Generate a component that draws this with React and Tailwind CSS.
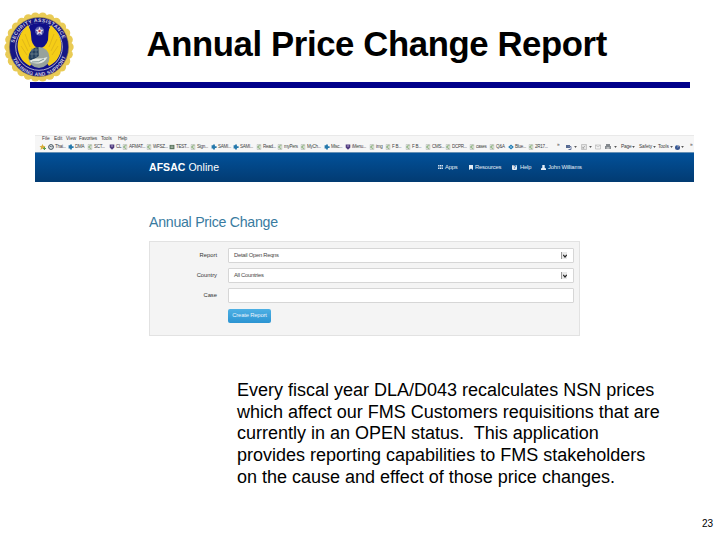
import clsx from "clsx";

const BOOKMARKS = [
  { label: "Thai...", icon: "globe", width: "w-[20px]" },
  { label: "DMA", icon: "plus", width: "w-[19px]" },
  { label: "SCT...", icon: "page", width: "w-[22px]" },
  { label: "CL", icon: "shield", width: "w-[13px]" },
  { label: "AFMAT...", icon: "page", width: "w-[24px]" },
  { label: "WFSZ...", icon: "page", width: "w-[23px]" },
  { label: "TEST...", icon: "box", width: "w-[21px]" },
  { label: "Sign...", icon: "page", width: "w-[21px]" },
  { label: "SAMI...", icon: "plus", width: "w-[22px]" },
  { label: "SAMI...", icon: "plus", width: "w-[23px]" },
  { label: "Read...", icon: "page", width: "w-[21px]" },
  { label: "myPers", icon: "page", width: "w-[23px]" },
  { label: "MyCh...", icon: "page", width: "w-[24px]" },
  { label: "Misc...", icon: "plus", width: "w-[21px]" },
  { label: "iMenu...", icon: "shield", width: "w-[24px]" },
  { label: "img", icon: "page", width: "w-[16px]" },
  { label: "F B...", icon: "page", width: "w-[20px]" },
  { label: "F B...", icon: "page", width: "w-[20px]" },
  { label: "CMS...", icon: "page", width: "w-[20px]" },
  { label: "DCPR...", icon: "page", width: "w-[24px]" },
  { label: "cases", icon: "page", width: "w-[20px]" },
  { label: "Q&A", icon: "page", width: "w-[19px]" },
  { label: "Blue...", icon: "diamond", width: "w-[20px]" },
  { label: "2R17...", icon: "page", width: "w-[25px]" },
];

function BookmarkIcon({ name }) {
  return (
    <svg viewBox="0 0 6 6" className="w-[6px] h-[6px] shrink-0">
      {name === "page" && (
        <>
          <path d="M1.2 .5h3.6v5H1.2z" fill="#f4f6f4" stroke="#a4aaa4" strokeWidth=".5" />
          <path d="M4.4 1.6A1.6 1.6 0 1 0 4.2 4.4M1.8 3h2" fill="none" stroke="#6c9c58" strokeWidth=".8" />
        </>
      )}
      {name === "globe" && (
        <>
          <circle cx="3" cy="3" r="2.4" fill="#e8eef0" stroke="#30404c" strokeWidth=".9" />
          <path d="M1.6 3.2l1-1 .8 1 1-1" fill="none" stroke="#30404c" strokeWidth=".8" />
        </>
      )}
      {name === "plus" && (
        <path d="M.6 1.2h1.5V.4h1.8v1.9h1.7v1.6H3.9v1.7H2.1V4.4H.6z" fill="#2478ac" />
      )}
      {name === "shield" && (
        <>
          <path d="M.7.6h4.6v3L3 5.7.7 3.6z" fill="#503c80" />
          <path d="M2 2h2" stroke="#d8c8e8" strokeWidth=".7" />
        </>
      )}
      {name === "box" && (
        <>
          <path d="M.6.9h4.8v4.3H.6z" fill="#56705a" />
          <path d="M1.6 2.2h2.8M1.6 3.6h2.8" stroke="#dce4d8" strokeWidth=".6" />
        </>
      )}
      {name === "diamond" && (
        <>
          <path d="M3 .4L5.8 3 3 5.6.2 3z" fill="#1f7cb4" />
          <circle cx="3" cy="3" r=".8" fill="#c8e4f4" />
        </>
      )}
    </svg>
  );
}

function Seal() {
  // scalloped outer edge
  const bumps = Array.from({ length: 26 }, (_, i) => {
    const a = (i / 26) * Math.PI * 2;
    return [35 + Math.cos(a) * 30.2, 35 + Math.sin(a) * 30.2];
  });

  return (
    <svg viewBox="0 0 70 70" className="w-[70px] h-[70px]">
      <defs>
        <path id="sealTop" d="M10.3 38a24.9 24.9 0 1 1 49.4 0" />
        <path id="sealBottom" d="M6.800 39a28.4 28.4 0 0 0 56.4 0" />
      </defs>
      {bumps.map(([cx, cy], i) => (
        <circle key={i} cx={cx} cy={cy} r="4.5" fill="#e9cb56" />
      ))}
      <circle cx="35" cy="35" r="32.5" fill="#e9cb56" />
      <circle cx="35" cy="35" r="29.6" fill="#161684" stroke="#8c7c4c" strokeWidth=".6" />
      <circle cx="35" cy="35" r="23.3" fill="#10108a" stroke="#d8d6dc" strokeWidth=".8" />
      <g fill="#d2cfdf" fontFamily="Liberation Sans" fontSize="5" fontWeight="bold">
        <text>
          <textPath href="#sealTop" startOffset="7" textLength="66">SECURITY ASSISTANCE</textPath>
        </text>
        <text>
          <textPath href="#sealBottom" startOffset="8" textLength="68">TRAINING AND SUPPORT</textPath>
        </text>
      </g>
      {/* wings */}
      <path
        d="M24 13C16 20 12.500 29 14 38c1.500 8 6 13 12 16l6-8 3-4V31l-6-7z"
        fill="#f5cd16"
      />
      <path
        d="M47 13c8 7 11.500 16 10 25-1.500 8-6 13-12 16l-6-8-4-4V31l7-7z"
        fill="#f5cd16"
      />
      <path
        d="M21 22l5 13M18 27l6 12M17 34l6 9M50 22l-5 13M53 27l-6 12M54 34l-6 9"
        stroke="#cda31c"
        strokeWidth=".5"
        fill="none"
      />
      {/* shield and star */}
      <path d="M26 13q9-4 19 0l-1 15q-2 7-8.500 8.500Q29 35 27.500 28z" fill="#10108a" />
      <circle cx="35.500" cy="19" r="4.500" fill="#5b5fae" />
      <path
        d="M35.500 14.800l1.100 2.900 3.100.1-2.400 1.900.8 3-2.600-1.700-2.600 1.700.8-3-2.400-1.900 3.100-.1z"
        fill="#eeeaf2"
      />
      <circle cx="35.500" cy="19" r="1.200" fill="#c23a48" />
      {/* globe */}
      <circle cx="35" cy="45.500" r="10.500" fill="#97a29c" />
      <path d="M34.500 35a10.500 10.500 0 0 0-9.700 12q2 2 4 1l6-4z" fill="#24405e" />
      <path d="M28 38h6M26 42h8M28 36v10M32 36v9" stroke="#7d9299" strokeWidth=".6" />
      <path d="M25.500 49q4-3 7-2.500 5 .5 11-1.500-3 6-9 6.500-6 .5-9-2.500z" fill="#e2e8e0" />
      <path d="M28 50q7 1 12-3" stroke="#4c6870" strokeWidth=".7" fill="none" />
    </svg>
  );
}

function Caret() {
  return (
    <svg viewBox="0 0 4 3" className="w-[3px] h-[2px] shrink-0">
      <path d="M0 0h4L2 3z" fill="#555" />
    </svg>
  );
}

function BrowserBar() {
  return (
    <div className="h-[17px] bg-[#f6f6f6] border-t border-[#e9e9e9] text-[#404040] text-[4.800px] leading-[6px] whitespace-nowrap">
      <div className="flex h-[6px] pl-[7px]">
        <span className="w-[12px]">File</span>
        <span className="w-[12px]">Edit</span>
        <span className="w-[13px]">View</span>
        <span className="w-[22px] tracking-[-0.2px]">Favorites</span>
        <span className="w-[17px] tracking-[-0.1px]">Tools</span>
        <span className="tracking-[-0.2px]">Help</span>
      </div>

      <div className="flex h-[10px] items-center pl-[4px]">
        <svg viewBox="0 0 8 6" className="w-[9px] h-[6px] shrink-0">
          <path d="M3 0l1 2h2L4.500 3.500 5 6 3 4.500 1 6l.5-2.500L0 2h2z" fill="#d8ae3c" />
          <path d="M5 3v3M3.500 4.500h3" stroke="#5c9c4c" />
        </svg>
        {BOOKMARKS.map((b, i) => (
          <span key={i} className={clsx("flex items-center gap-px shrink-0", b.width)}>
            <BookmarkIcon name={b.icon} />
            <span className="text-[4.500px] tracking-[-0.250px]">{b.label}</span>
          </span>
        ))}

        {/* command bar */}
        <span className="w-[8px] -mt-[5px] pl-[4px]">»</span>
        <div className="flex items-center ml-[5px] shrink-0">
          <svg viewBox="0 0 6 6" className="w-[6px] h-[6px]">
            <path d="M0 1h4v3H0z" fill="#566a92" />
            <path d="M2 2.500h3V5.500H2.500" stroke="#6878a0" fill="none" />
          </svg>
          <span className="w-[9px] pl-[2px] flex"><Caret /></span>
          <svg viewBox="0 0 6 6" className="w-[6px] h-[6px]">
            <path d="M.5.500h5v5h-5z" fill="#e6e6e6" stroke="#b4b4b4" strokeWidth=".7" />
            <path d="M1.800 4.200l2.400-2.400M1.800 2.800v1.400h1.400" fill="none" stroke="#999" strokeWidth=".7" />
          </svg>
          <span className="w-[8px] pl-[2px] flex"><Caret /></span>
          <svg viewBox="0 0 6 6" className="w-[6px] h-[6px]">
            <path d="M.5 1h5v4h-5zM.5 1L3 3l2.500-2" fill="#f4f4f4" stroke="#b0b0b0" strokeWidth=".6" />
          </svg>
          <svg viewBox="0 0 6 6" className="w-[6px] h-[6px] ml-[4px]">
            <path d="M1 0h4v2h1v3H0V2h1z" fill="#84898e" />
            <path d="M1.500 4h3" stroke="#eee" />
          </svg>
          <span className="w-[10px] pl-[3px] flex"><Caret /></span>
          <span className="w-[18px] flex items-center gap-px tracking-[-0.2px]">Page <Caret /></span>
          <span className="w-[19px] flex items-center gap-px tracking-[-0.1px]">Safety <Caret /></span>
          <span className="w-[17px] flex items-center gap-px tracking-[-0.1px]">Tools <Caret /></span>
          <span className="flex items-center justify-center w-[5px] h-[5px] rounded-full bg-[#38558e] text-white text-[4px]">?</span>
          <span className="w-[10px] pl-[1px] flex"><Caret /></span>
          <span className="-mt-[5px]">»</span>
        </div>
      </div>
    </div>
  );
}

function SiteHeader() {
  return (
    <header className="flex h-[30px] items-center bg-gradient-to-b from-[#02519a] to-[#023b72] border-t border-[#6690b5] text-white whitespace-nowrap">
      <div className="w-[403px] pl-[114px] text-[10.500px] leading-none tracking-[0.050px]">
        <b>AFSAC</b> Online
      </div>
      <nav className="flex items-center text-[5.800px] leading-none tracking-[-0.150px] text-[#e4edf5]">
        <span className="flex w-[31px] items-center gap-[2px]">
          <svg viewBox="0 0 6 5" className="w-[5px] h-[4px]">
            <path d="M0 0h1.600v2H0zm2.200 0h1.600v2H2.200zm2.200 0H6v2H4.400zM0 3h1.600v2H0zm2.200 0h1.600v2H2.200zm2.200 0H6v2H4.400z" fill="currentColor" />
          </svg>
          Apps
        </span>
        <span className="flex w-[43px] items-center gap-[2px]">
          <svg viewBox="0 0 4 5" className="w-[4px] h-[5px]">
            <path d="M0 0h4v5L2 3.500 0 5z" fill="currentColor" />
          </svg>
          Resources
        </span>
        <span className="flex w-[29px] items-center gap-[3px]">
          <span className="flex w-[5px] h-[5px] items-center justify-center rounded-[1px] bg-[#e4edf5] text-[#02488a] text-[5px] font-bold">?</span>
          Help
        </span>
        <span className="flex items-center gap-[2px]">
          <svg viewBox="0 0 5 5" className="w-[5px] h-[5px]">
            <path d="M1.300 0h2.400v2.800L5 3.600V5H0V3.600l1.300-.8z" fill="currentColor" />
          </svg>
          John Williams
        </span>
      </nav>
    </header>
  );
}

function Field({ label, value, select }) {
  return (
    <div className="flex h-[14px] items-center text-[5.800px] leading-none tracking-[-0.250px] text-[#484848]">
      <label className="w-[67px] text-right tracking-normal text-[#333]">{label}</label>
      <div className="ml-[11px] flex h-[15px] w-[346px] items-center justify-between rounded-[1px] border border-[#d6d6d6] bg-white pl-[5px] pr-[6px]">
        <span>{value}</span>
        {select && (
          <span className="flex h-[7px] w-[6px] items-center justify-center border-l border-[#999] bg-[#e9e9e9]">
            <svg viewBox="0 0 4 4" className="w-[4px] h-[4px]">
              <path d="M.3.800L2 3 3.700.800" fill="none" stroke="#222" strokeWidth="1.200" />
            </svg>
          </span>
        )}
      </div>
    </div>
  );
}

export default function App() {
  return (
    <div className="flex h-[540px] w-[720px] flex-col overflow-hidden bg-white font-['Liberation_Sans',sans-serif] text-black">
      <div className="flex h-[82px] pl-[4px] pt-[12px]">
        <Seal />
        <h1 className="ml-[72.500px] mt-[12px] whitespace-nowrap text-[34.700px] leading-[40px] font-bold tracking-[-0.380px]">
          Annual Price Change Report
        </h1>
      </div>
      <div className="ml-[30px] h-[6px] w-[660px] shrink-0 bg-[#00008b]" />

      <div className="ml-[35px] mt-[47px] w-[659px]">
        <BrowserBar />
        <SiteHeader />

        <main className="pl-[114px]">
          <h2 className="mt-[31px] h-[28px] text-[14.200px] leading-[18px] tracking-[-0.280px] text-[#397b9f]">
            Annual Price Change
          </h2>
          <form className="flex h-[95px] w-[431px] flex-col gap-[6px] border border-[#e2e2e2] bg-[#f4f4f4] pt-[6.500px]">
            <Field label="Report" value="Detail Open Reqns" select />
            <Field label="Country" value="All Countries" select />
            <Field label="Case" value="" />
            <button
              type="button"
              className="ml-[78px] h-[14.500px] w-[43px] shrink-0 rounded-[2px] bg-gradient-to-b from-[#4db0e4] to-[#2b94d2] text-[5.800px] leading-none tracking-[-0.150px] text-[#e8f4fc]"
            >
              Create Report
            </button>
          </form>
        </main>
      </div>

      <p className="ml-[237px] mt-[44px] whitespace-pre text-[18px] leading-[21.700px]">
        {`Every fiscal year DLA/D043 recalculates NSN prices
which affect our FMS Customers requisitions that are
currently in an OPEN status.  This application
provides reporting capabilities to FMS stakeholders
on the cause and effect of those price changes.`}
      </p>

      <footer className="mt-auto flex justify-end pb-[9px] pr-[7px] text-[10px] leading-[14px]">23</footer>
    </div>
  );
}
